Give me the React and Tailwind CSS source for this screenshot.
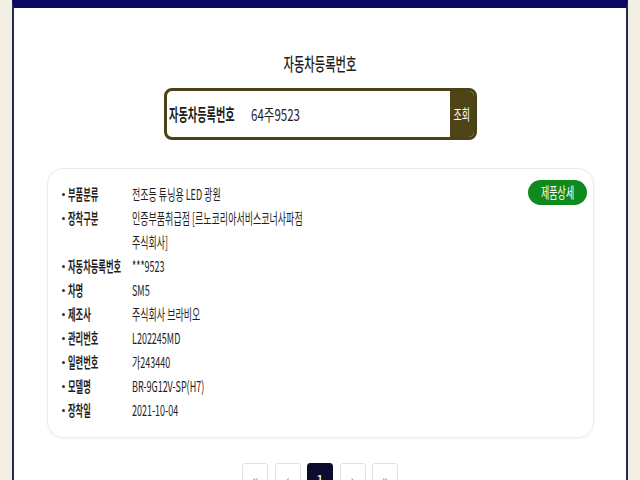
import React from "react";

const FONT = { fontFamily: '"Noto Sans CJK KR", "Noto Sans", sans-serif' };

// narrow text: the page uses a condensed look, so glyphs are squeezed horizontally
const Narrow = ({ children, className = "scale-x-[0.55]" }) => (
  <span className={`inline-block whitespace-nowrap origin-left ${className}`}>{children}</span>
);

const rows = [
  { label: "부품분류", value: ["전조등 튜닝용 LED 광원"] },
  { label: "장착구분", value: ["인증부품취급점 [르노코리아서비스코너사파점", "주식회사]"] },
  { label: "자동차등록번호", value: ["***9523"] },
  { label: "차명", value: ["SM5"] },
  { label: "제조사", value: ["주식회사 브라비오"] },
  { label: "관리번호", value: ["L202245MD"] },
  { label: "일련번호", value: ["가243440"] },
  { label: "모델명", value: ["BR-9G12V-SP(H7)"] },
  { label: "장착일", value: ["2021-10-04"] },
];

const pages = ["«", "‹", "1", "›", "»"];

export default function App() {
  return (
    <div className="h-[480px] w-[640px] overflow-hidden bg-[#f1efe3] px-[12px] text-[#1e1e1e]" style={FONT}>
      <div className="h-full border-x-2 border-t-[8px] border-x-[#26245a] border-t-[#0a0862] bg-white">
        {/* page title */}
        <div className="pt-[43px] text-center text-[18px] font-medium leading-[24px]">
          <span className="inline-block whitespace-nowrap origin-center scale-x-[0.63]">자동차등록번호</span>
        </div>

        {/* search box */}
        <div className="mx-auto mt-[13px] flex h-[52px] w-[313px] overflow-hidden rounded-lg border-[3px] border-[#4a4216]">
          <div className="flex flex-1 items-center pl-[2px]">
            <div className="w-[82px] shrink-0 text-[17px] font-semibold">
              <Narrow className="scale-x-[0.6]">자동차등록번호</Narrow>
            </div>
            <div className="text-[16px]">
              <Narrow className="scale-x-[0.72]">64주9523</Narrow>
            </div>
          </div>
          <button className="flex w-[24px] items-center justify-center bg-[#4f4416] text-[15px] text-white">
            <span className="inline-block whitespace-nowrap origin-center scale-x-[0.6]">조회</span>
          </button>
        </div>

        {/* detail card */}
        <div className="ml-[33px] mr-[32px] mt-[28px] flex rounded-2xl border border-[#ebebeb] pb-[15px] pl-[14px] pr-[6px] pt-[11px] shadow-[0_1px_3px_rgba(0,0,0,0.05)]">
          <div className="mt-[2px] flex-1 text-[15px] leading-[24px]">
            {rows.map((r) => (
              <div key={r.label} className="flex">
                <div className="flex w-[70px] shrink-0 items-start">
                  <span className="mt-[11px] h-[3px] w-[3px] shrink-0 rounded-full bg-[#333]" />
                  <span className="ml-[3px] font-semibold">
                    <Narrow>{r.label}</Narrow>
                  </span>
                </div>
                <div>
                  {r.value.map((v) => (
                    <div key={v}>
                      <Narrow className="scale-x-[0.6]">{v}</Narrow>
                    </div>
                  ))}
                </div>
              </div>
            ))}
          </div>
          <button className="h-[25px] w-[59px] shrink-0 rounded-full bg-[#0f8a1c] text-[15px] text-white">
            <span className="inline-block whitespace-nowrap origin-center scale-x-[0.6]">제품상세</span>
          </button>
        </div>

        {/* pagination */}
        <div className="mt-[25px] flex justify-center gap-[6.5px]">
          {pages.map((p) => (
            <div
              key={p}
              className={`flex h-[32px] w-[26px] items-center justify-center rounded-[3px] border text-[14px] ${
                p === "1" ? "border-[#0d0c2e] bg-[#0d0c2e] text-white" : "border-[#e2e2e2] text-[#888]"
              }`}
            >
              {p}
            </div>
          ))}
        </div>
      </div>
    </div>
  );
}
